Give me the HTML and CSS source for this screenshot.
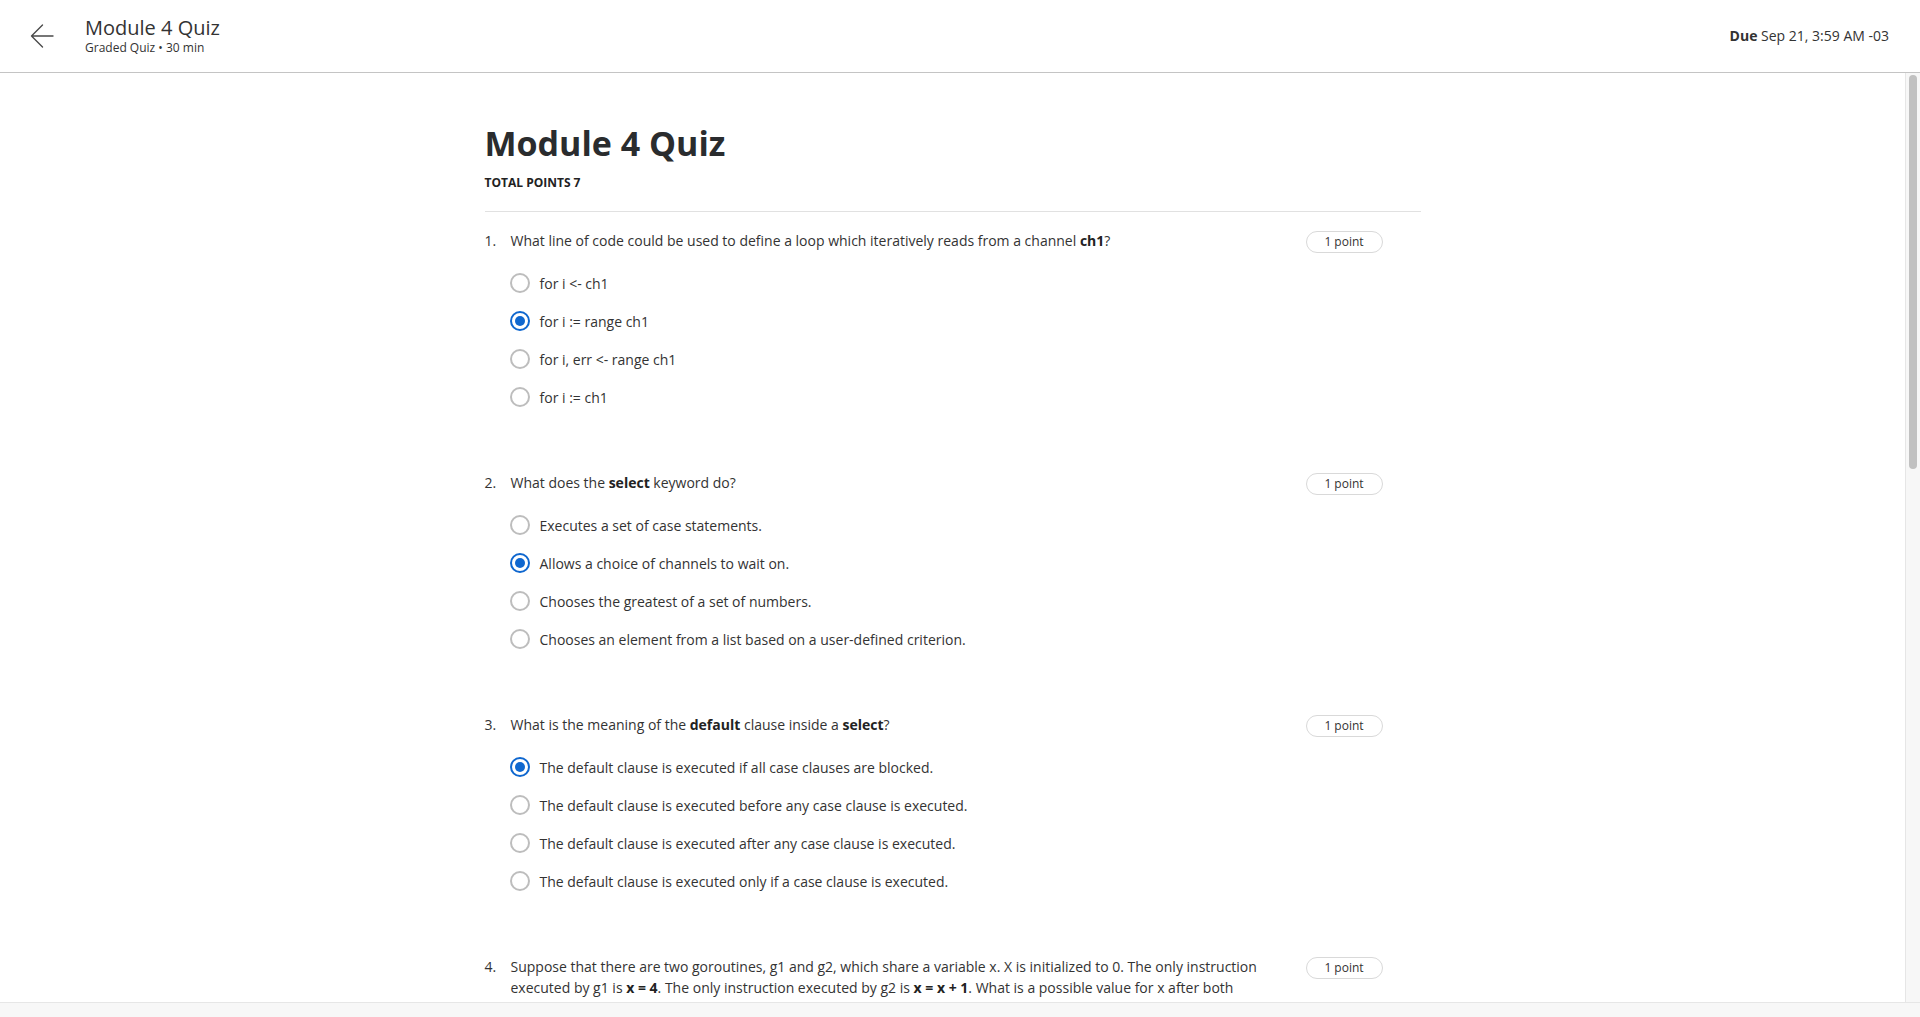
FILE: index.html
```html
<!DOCTYPE html>
<html lang="en">
<head>
<meta charset="utf-8">
<title>Module 4 Quiz</title>
<link rel="stylesheet" href="styles.css">
</head>
<body>
<header class="topbar">
  <div class="topbar-left">
    <button class="back" aria-label="Back">
      <svg width="24" height="24" viewBox="0 0 24 24" fill="none" stroke="#4a4a4a" stroke-width="1.4" stroke-linecap="round" stroke-linejoin="round"><path d="M23 12H1.5M12.5 1L1.5 12L12.5 23"/></svg>
    </button>
    <div class="topbar-titles">
      <div class="topbar-title">Module 4 Quiz</div>
      <div class="topbar-sub">Graded Quiz • 30 min</div>
    </div>
  </div>
  <div class="due"><b>Due</b> Sep 21, 3:59 AM -03</div>
</header>
<div class="viewport">
  <main class="scroller">
    <div class="content">
      <h1 class="quiz-title">Module 4 Quiz</h1>
      <div class="total">TOTAL POINTS 7</div>
      <hr class="rule">

      <section class="question">
        <div class="q-row">
          <span class="q-num">1.</span>
          <div class="q-text">What line of code could be used to define a loop which iteratively reads from a channel <b>ch1</b>?</div>
          <span class="badge">1 point</span>
        </div>
        <ul class="options">
          <li class="option"><span class="radio"></span>for i &lt;- ch1</li>
          <li class="option"><span class="radio checked"></span>for i := range ch1</li>
          <li class="option"><span class="radio"></span>for i, err &lt;- range ch1</li>
          <li class="option"><span class="radio"></span>for i := ch1</li>
        </ul>
      </section>

      <section class="question">
        <div class="q-row">
          <span class="q-num">2.</span>
          <div class="q-text">What does the <b>select</b> keyword do?</div>
          <span class="badge">1 point</span>
        </div>
        <ul class="options">
          <li class="option"><span class="radio"></span>Executes a set of case statements.</li>
          <li class="option"><span class="radio checked"></span>Allows a choice of channels to wait on.</li>
          <li class="option"><span class="radio"></span>Chooses the greatest of a set of numbers.</li>
          <li class="option"><span class="radio"></span>Chooses an element from a list based on a user-defined criterion.</li>
        </ul>
      </section>

      <section class="question">
        <div class="q-row">
          <span class="q-num">3.</span>
          <div class="q-text">What is the meaning of the <b>default</b> clause inside a <b>select</b>?</div>
          <span class="badge">1 point</span>
        </div>
        <ul class="options">
          <li class="option"><span class="radio checked"></span>The default clause is executed if all case clauses are blocked.</li>
          <li class="option"><span class="radio"></span>The default clause is executed before any case clause is executed.</li>
          <li class="option"><span class="radio"></span>The default clause is executed after any case clause is executed.</li>
          <li class="option"><span class="radio"></span>The default clause is executed only if a case clause is executed.</li>
        </ul>
      </section>

      <section class="question">
        <div class="q-row">
          <span class="q-num">4.</span>
          <div class="q-text">Suppose that there are two goroutines, g1 and g2, which share a variable x. X is initialized to 0. The only instruction executed by g1 is <b>x = 4</b>. The only instruction executed by g2 is <b>x = x + 1</b>. What is a possible value for x after both</div>
          <span class="badge">1 point</span>
        </div>
      </section>
    </div>
  </main>
  <div class="vscroll"><div class="thumb"></div></div>
</div>
<div class="hscroll"></div>
</body>
</html>
```
FILE: styles.css
```css
* { box-sizing: border-box; }
html, body {
  margin: 0;
  padding: 0;
  height: 1017px;
  overflow: hidden;
  background: #fff;
  font-family: "Open Sans", "Liberation Sans", sans-serif;
  color: #333;
}
body {
  display: flex;
  flex-direction: column;
}
.topbar {
  height: 73px;
  flex: 0 0 73px;
  border-bottom: 1px solid #c4c4c4;
  display: flex;
  align-items: center;
  justify-content: space-between;
  padding: 0 31px 0 30px;
}
.topbar-left {
  display: flex;
  align-items: center;
}
.back {
  background: none;
  border: 0;
  padding: 0;
  width: 24px;
  height: 24px;
  margin-right: 31px;
  display: flex;
}
.topbar-titles {
  display: flex;
  flex-direction: column;
}
.topbar-title {
  font-size: 20px;
  line-height: 24px;
  color: #333;
}
.topbar-sub {
  font-size: 12px;
  line-height: 16px;
  color: #333;
}
.due {
  font-size: 14px;
  line-height: 20px;
  margin-top: -1px;
  color: #333;
}
.due b { font-weight: 700; }
.viewport {
  flex: 0 0 929px;
  display: flex;
  overflow: hidden;
}
.scroller {
  flex: 1;
  overflow: hidden;
}
.content {
  width: 936px;
  margin: 0 auto;
  padding-top: 50px;
}
.quiz-title {
  margin: 0;
  font-size: 34px;
  line-height: 40px;
  font-weight: 700;
  color: #2a2c2e;
}
.total {
  margin-top: 12px;
  font-size: 12px;
  line-height: 16px;
  font-weight: 700;
  color: #222;
}
.rule {
  margin: 20px 0 0;
  border: 0;
  border-top: 1px solid #e1e1e1;
  height: 0;
}
.question {
  padding-top: 18px;
  padding-bottom: 38px;
}
.q-row {
  display: flex;
  align-items: flex-start;
  font-size: 14px;
  line-height: 21px;
  color: #333;
}
.q-num {
  flex: 0 0 26px;
}
.q-text {
  flex: 1;
}
.q-text b { font-weight: 700; color: #222; }
.badge {
  flex: 0 0 77px;
  height: 22px;
  margin-top: 1px;
  margin-left: 40px;
  margin-right: 38px;
  border: 1px solid #d9d9d9;
  border-radius: 11px;
  font-size: 12px;
  line-height: 20px;
  text-align: center;
  color: #333;
}
.options {
  list-style: none;
  margin: 11px 0 0 25px;
  padding: 0;
}
.option {
  height: 38px;
  display: flex;
  align-items: center;
  font-size: 14px;
  color: #333;
}
.radio {
  width: 20px;
  height: 20px;
  flex: 0 0 20px;
  border: 2px solid #bdbdbd;
  border-radius: 50%;
  margin-right: 10px;
  display: flex;
  align-items: center;
  justify-content: center;
}
.radio.checked {
  border: 2px solid #0f67cf;
}
.radio.checked::after {
  content: "";
  width: 10px;
  height: 10px;
  border-radius: 50%;
  background: #0f67cf;
}
.vscroll {
  flex: 0 0 15px;
  background: #f7f7f7;
  border-left: 1px solid #e6e6e6;
  padding: 2px 0 0 3px;
}
.thumb {
  width: 8px;
  height: 394px;
  border-radius: 4px;
  background: #c1c1c1;
}
.hscroll {
  flex: 0 0 15px;
  background: #f7f7f7;
  border-top: 1px solid #e6e6e6;
}
```
